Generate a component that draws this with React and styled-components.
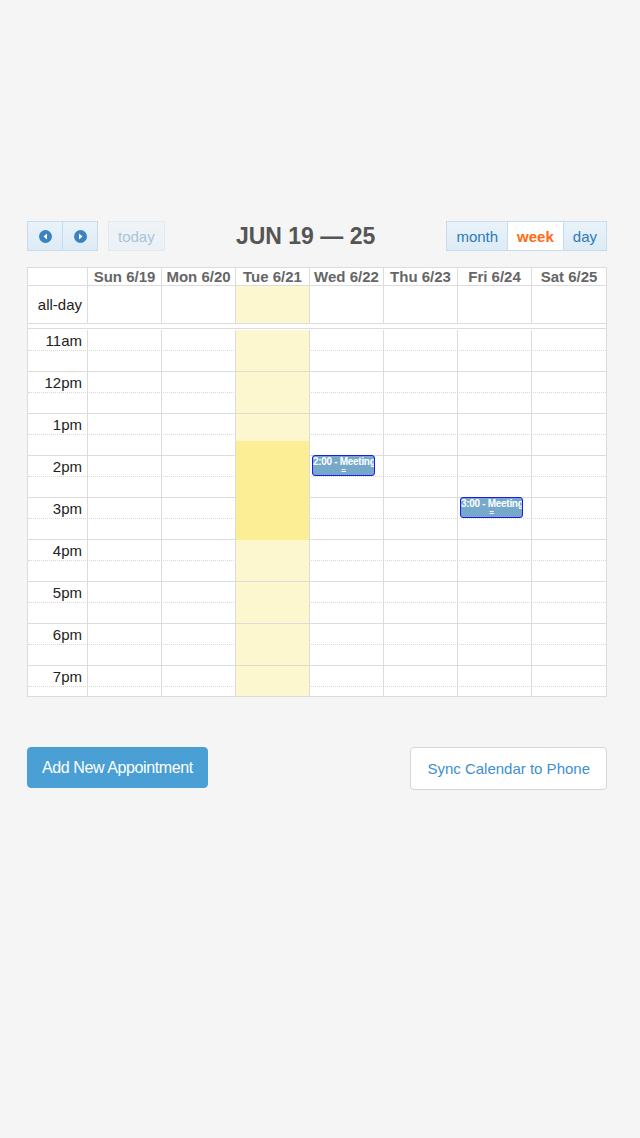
import React from "react";
import styled, { createGlobalStyle } from "styled-components";

const GlobalStyle = createGlobalStyle`
  html, body {
    margin: 0;
    padding: 0;
    background: #f5f5f5;
    font-family: "Liberation Sans", Arial, sans-serif;
  }
`;

const Page = styled.div`
  width: 640px;
  min-height: 1138px;
  padding: 221px 33px 0 27px;
  box-sizing: border-box;
`;

const Toolbar = styled.div`
  display: flex;
  justify-content: space-between;
  align-items: center;
  height: 30px;
  margin-bottom: 16px;
`;

const Left = styled.div`
  display: flex;
  gap: 10px;
`;

const Group = styled.div`
  display: flex;
`;

const ToolButton = styled.button`
  height: 30px;
  padding: 0 ${(p) => (p.$icon ? "0" : "9px")};
  width: ${(p) => (p.$icon ? "36px" : "auto")};
  border: 1px solid #c6dcec;
  margin-left: ${(p) => (p.$first ? "0" : "-1px")};
  background: ${(p) =>
    p.$active ? "#fff" : "linear-gradient(#eaf3fa, #dcebf6)"};
  color: ${(p) => (p.$active ? "#ff6a13" : "#2e7ab8")};
  font-weight: ${(p) => (p.$active ? "bold" : "normal")};
  font-family: "Liberation Sans", Arial, sans-serif;
  font-size: 15px;
  display: flex;
  align-items: center;
  justify-content: center;
  opacity: ${(p) => (p.$disabled ? 0.4 : 1)};
  cursor: pointer;
`;

const Title = styled.h2`
  margin: 0;
  font-size: 23px;
  font-weight: bold;
  color: #555;
`;

const Calendar = styled.div`
  width: 580px;
  border: 1px solid #dcdcdc;
  box-sizing: border-box;
  background: #fff;
`;

const Row = styled.div`
  display: grid;
  grid-template-columns: 59px repeat(6, 74px) 1fr;
  height: ${(p) => p.$h}px;
  border-bottom: 1px solid #dcdcdc;
  box-sizing: border-box;
`;

const HeadCell = styled.div`
  border-left: ${(p) => (p.$first ? "none" : "1px solid #dcdcdc")};
  font-size: 15px;
  font-weight: bold;
  color: #666;
  text-align: center;
  line-height: 17px;
`;

const AxisCell = styled.div`
  font-size: 15px;
  color: #222;
  text-align: right;
  padding-right: 5px;
  line-height: ${(p) => p.$lh}px;
`;

const DayCell = styled.div`
  border-left: 1px solid #dcdcdc;
  background: ${(p) => (p.$today ? "#fcf7cf" : "transparent")};
`;

const Divider = styled.div`
  height: 5px;
  box-sizing: border-box;
  border-bottom: 1px solid #dcdcdc;
`;

const Scroller = styled.div`
  position: relative;
  height: 367px;
  padding-top: 1px;
  box-sizing: border-box;
  overflow: hidden;
`;

const Slot = styled.div`
  height: 21px;
  box-sizing: border-box;
  border-bottom: 1px ${(p) => (p.$half ? "solid #dcdcdc" : "dotted #d8d8d8")};
  display: grid;
  grid-template-columns: 59px repeat(6, 74px) 1fr;
`;

const SlotLabel = styled.div`
  font-size: 15px;
  color: #222;
  text-align: right;
  padding-right: 5px;
  line-height: 22px;
`;

const Highlight = styled.div`
  position: absolute;
  left: 208px;
  width: 73px;
  background: #fcee94;
`;

const Event = styled.div`
  position: absolute;
  width: 61px;
  height: 19px;
  background: #76a8ca;
  border: 1px solid #1b1bf0;
  border-radius: 3px;
  color: #fff;
  font-size: 10px;
  font-weight: bold;
  letter-spacing: -0.3px;
  overflow: hidden;
  white-space: nowrap;
  line-height: 11px;
`;

const Handle = styled.div`
  text-align: center;
  font-size: 8px;
  line-height: 7px;
`;

const Actions = styled.div`
  display: flex;
  justify-content: space-between;
  margin-top: 50px;
`;

const ActionButton = styled.button`
  height: ${(p) => (p.$primary ? "41px" : "43px")};
  padding: 0 ${(p) => (p.$primary ? "14px" : "16px")};
  border-radius: 4px;
  border: 1px solid ${(p) => (p.$primary ? "#4a9fd5" : "#d6d6d6")};
  background: ${(p) => (p.$primary ? "#4a9fd5" : "#fff")};
  color: ${(p) => (p.$primary ? "#fff" : "#3d8fd0")};
  font-family: "Liberation Sans", Arial, sans-serif;
  font-size: ${(p) => (p.$primary ? "16px" : "15px")};
  letter-spacing: ${(p) => (p.$primary ? "-0.4px" : "0")};
  cursor: pointer;
`;

const Arrow = ({ dir }) => (
  <svg width="13" height="13" viewBox="0 0 13 13">
    <circle cx="6.5" cy="6.5" r="6.5" fill="#3a83c0" />
    {dir === "left" ? (
      <path d="M8 3.5 L4.5 6.5 L8 9.5 Z" fill="#fff" />
    ) : (
      <path d="M5 3.5 L8.5 6.5 L5 9.5 Z" fill="#fff" />
    )}
  </svg>
);

const days = ["Sun 6/19", "Mon 6/20", "Tue 6/21", "Wed 6/22", "Thu 6/23", "Fri 6/24", "Sat 6/25"];
const hours = ["11am", "12pm", "1pm", "2pm", "3pm", "4pm", "5pm", "6pm", "7pm"];

const DayCells = () =>
  days.map((d, i) => <DayCell key={d} $today={i === 2} />);

export default function App() {
  return (
    <Page>
      <GlobalStyle />
      <Toolbar>
        <Left>
          <Group>
            <ToolButton $icon $first>
              <Arrow dir="left" />
            </ToolButton>
            <ToolButton $icon>
              <Arrow dir="right" />
            </ToolButton>
          </Group>
          <ToolButton $first $disabled>today</ToolButton>
        </Left>
        <Title>JUN 19 — 25</Title>
        <Group>
          <ToolButton $first>month</ToolButton>
          <ToolButton $active>week</ToolButton>
          <ToolButton>day</ToolButton>
        </Group>
      </Toolbar>

      <Calendar>
        <Row $h={18}>
          <HeadCell $first />
          {days.map((d) => (
            <HeadCell key={d}>{d}</HeadCell>
          ))}
        </Row>
        <Row $h={38}>
          <AxisCell $lh={37}>all-day</AxisCell>
          <DayCells />
        </Row>
        <Divider />
        <Scroller>
          {hours.map((h) => (
            <React.Fragment key={h}>
              <Slot>
                <SlotLabel>{h}</SlotLabel>
                <DayCells />
              </Slot>
              <Slot $half>
                <SlotLabel />
                <DayCells />
              </Slot>
            </React.Fragment>
          ))}
          <Highlight style={{ top: 112, height: 99 }} />
          <Event style={{ left: 284, top: 126 }}>
            2:00 - Meeting
            <Handle>=</Handle>
          </Event>
          <Event style={{ left: 432, top: 168 }}>
            3:00 - Meeting
            <Handle>=</Handle>
          </Event>
        </Scroller>
      </Calendar>

      <Actions>
        <ActionButton $primary>Add New Appointment</ActionButton>
        <ActionButton>Sync Calendar to Phone</ActionButton>
      </Actions>
    </Page>
  );
}
